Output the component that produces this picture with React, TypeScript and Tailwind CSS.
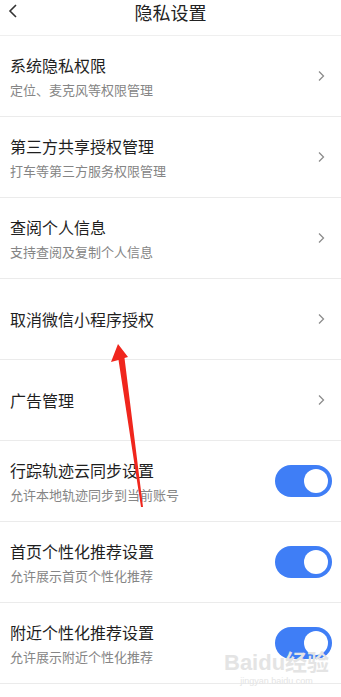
import { useState } from "react"

type Item = {
  title: string
  desc?: string
  toggle?: boolean
}

const items: Item[] = [
  { title: "系统隐私权限", desc: "定位、麦克风等权限管理" },
  { title: "第三方共享授权管理", desc: "打车等第三方服务权限管理" },
  { title: "查阅个人信息", desc: "支持查阅及复制个人信息" },
  { title: "取消微信小程序授权" },
  { title: "广告管理" },
  { title: "行踪轨迹云同步设置", desc: "允许本地轨迹同步到当前账号", toggle: true },
  { title: "首页个性化推荐设置", desc: "允许展示首页个性化推荐", toggle: true },
  { title: "附近个性化推荐设置", desc: "允许展示附近个性化推荐", toggle: true }
]

function Chevron() {
  return (
    <svg width="7" height="12" viewBox="0 0 7 12" className="shrink-0">
      <path d="M1 1.5l4.5 4.5L1 10.5" fill="none" stroke="#8c8c8c" strokeWidth="1.3" />
    </svg>
  )
}

function Toggle({ on, onChange }: { on: boolean; onChange: () => void }) {
  return (
    <button
      onClick={onChange}
      className={`flex h-[32px] w-[57px] shrink-0 items-center rounded-full px-[4px] ${
        on ? "justify-end bg-[#3f7ef6]" : "justify-start bg-[#e3e3e3]"
      }`}>
      <span className="block h-[24px] w-[24px] rounded-full bg-white" />
    </button>
  )
}

function Row({ item }: { item: Item }) {
  const [on, setOn] = useState(true)
  return (
    <div className="flex h-[81px] items-center border-b border-[#ebebeb] pl-[10px]">
      <div className="flex min-w-0 flex-1 flex-col justify-center">
        <p className="text-[16px] leading-[22px] text-[#1f1f1f]">{item.title}</p>
        {item.desc && (
          <p className="mt-[5px] text-[13px] leading-[18px] text-[#858585]">{item.desc}</p>
        )}
      </div>
      {item.toggle ? (
        <div className="mr-[9px]">
          <Toggle on={on} onChange={() => setOn(!on)} />
        </div>
      ) : (
        <div className="mr-[16px]">
          <Chevron />
        </div>
      )}
    </div>
  )
}

export default function App() {
  return (
    <div
      className="relative min-h-[697px] w-full overflow-hidden bg-white"
      style={{ fontFamily: '"Noto Sans CJK SC", "Noto Sans", sans-serif' }}>
      <header className="relative flex h-[36px] items-start justify-center border-b border-[#efefef]">
        <svg
          width="10"
          height="14"
          viewBox="0 0 10 14"
          className="absolute left-[8px] top-[4px]">
          <path d="M8 1L2 7l6 6" fill="none" stroke="#333" strokeWidth="1.6" />
        </svg>
        <h1 className="text-[18px] leading-[24px] text-[#222]">隐私设置</h1>
      </header>

      {items.map((it) => (
        <Row key={it.title} item={it} />
      ))}

      {/* red annotation arrow */}
      <svg
        width="341"
        height="697"
        className="pointer-events-none absolute left-0 top-0">
        <polygon
          points="118,344 128,357 124.5,358 143,507 141,507 118.5,360 111,362"
          fill="#f0261d"
        />
      </svg>

      {/* watermark */}
      <div className="pointer-events-none absolute left-[224px] top-[651px] flex flex-col items-center text-[#e4e4e4]">
        <span
          className="text-[22px] font-semibold leading-[24px]"
          style={{ fontFamily: '"Liberation Sans", "Noto Sans CJK SC", sans-serif' }}>
          Baidu经验
        </span>
        <span
          className="text-[9px] leading-[12px]"
          style={{ fontFamily: '"Liberation Sans", sans-serif' }}>
          jingyan.baidu.com
        </span>
      </div>
    </div>
  )
}
